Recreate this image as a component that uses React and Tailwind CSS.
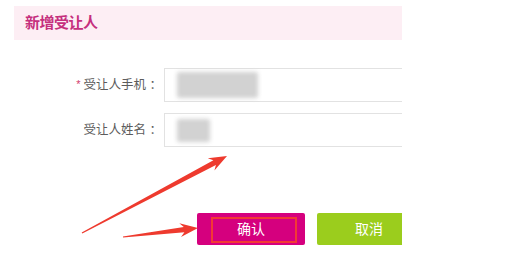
import React from 'react';

const arrows = [
    { from: [82, 233], to: [227, 156] },
    { from: [123, 237], to: [198, 228] },
];

const arrowPoints = ({ from, to }) => {
    const dx = to[0] - from[0];
    const dy = to[1] - from[1];
    const len = Math.hypot(dx, dy);
    const ux = dx / len, uy = dy / len;
    const nx = -uy, ny = ux;
    const headLen = 18, headW = 7, neckW = 2.6, tailW = 0.6;
    const bx = to[0] - ux * headLen, by = to[1] - uy * headLen;
    const nbx = to[0] - ux * (headLen - 4), nby = to[1] - uy * (headLen - 4);
    const pts = [
        [from[0] + nx * tailW, from[1] + ny * tailW],
        [nbx + nx * neckW, nby + ny * neckW],
        [bx + nx * headW, by + ny * headW],
        to,
        [bx - nx * headW, by - ny * headW],
        [nbx - nx * neckW, nby - ny * neckW],
        [from[0] - nx * tailW, from[1] - ny * tailW],
    ];
    return pts.map(p => `${p[0].toFixed(1)},${p[1].toFixed(1)}`).join(' ');
};

const Field = ({ label, required, blurWidth, blurHeight, className = '' }) => (
    <div className={`flex items-center h-[34px] ${className}`}>
        <div className="w-[150px] shrink-0 pr-[2px] text-right text-[12.5px] text-[#5c5c5c]">
            {required && <span className="text-[#d33a6a] mr-[3px] text-[11px] align-top">*</span>}
            {label} ：
        </div>
        <div className="w-[260px] h-full border border-[#e2e2e2] flex items-center pl-[12px] shrink-0">
            <div className="bg-[#d2d2d2] blur-[2px] rounded-[2px]" style={{ width: blurWidth, height: blurHeight }} />
        </div>
    </div>
);

export default function App() {
    return (
        <div className="relative w-[531px] h-[275px] bg-white overflow-hidden" style={{ fontFamily: '"Liberation Sans", "Noto Sans CJK SC", sans-serif' }}>
            <div className="ml-[14px] w-[388px] pt-[6px] overflow-hidden">
                <div className="h-[34px] bg-[#fdeef4] pl-[11px] flex items-center">
                    <span className="text-[15px] font-bold text-[#c52f7d] tracking-[-0.5px]">新增受让人</span>
                </div>

                <div className="mt-[28px]">
                    <Field label="受让人手机" required blurWidth={81} blurHeight={26} />
                    <Field label="受让人姓名" blurWidth={33} blurHeight={23} className="mt-[11px]" />
                </div>

                <div className="mt-[66px] pl-[183px] flex gap-[12px]">
                    <button className="relative w-[108px] h-[32px] shrink-0 bg-[#d5007e] rounded-[2px] text-white text-[14px]">
                        <span className="absolute left-[14px] right-[8px] top-[4px] bottom-[2px] border-2 border-[#f23a34]" />
                        <span className="relative">确认</span>
                    </button>
                    <button className="w-[104px] h-[32px] shrink-0 bg-[#9bcd1d] rounded-[2px] text-white text-[14px]">
                        取消
                    </button>
                </div>
            </div>

            <svg className="absolute inset-0 pointer-events-none" width="531" height="275">
                {arrows.map((a, i) => (
                    <polygon key={i} points={arrowPoints(a)} fill="#ee3a2e" />
                ))}
            </svg>
        </div>
    );
}
